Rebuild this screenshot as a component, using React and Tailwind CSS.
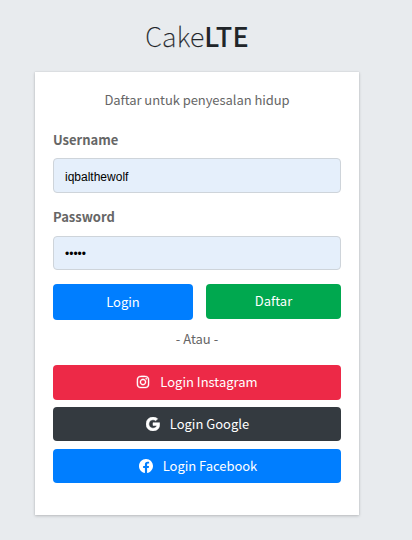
import { FaInstagram } from "react-icons/fa";
import { BsFacebook, BsGoogle } from "react-icons/bs";

function Field({ id, label, type, value, className, inputClass }) {
  return (
    <div className={className}>
      <label htmlFor={id} className="block h-[21px] text-[13px] leading-[20px] font-bold text-[#666666]">
        {label}
      </label>
      <input
        id={id}
        type={type}
        defaultValue={value}
        className={`block w-full rounded-[4px] border border-[#ced4da] bg-[#e5effb] px-[11px] font-['Liberation_Sans',sans-serif] text-[12px] text-black outline-none ${inputClass}`}
      />
    </div>
  );
}

function SocialButton({ icon, label, className }) {
  return (
    <button className={`flex w-full items-center justify-center gap-[10px] rounded-[4px] pb-px text-[13px] text-white ${className}`}>
      {icon}
      <span>{label}</span>
    </button>
  );
}

export default function App() {
  return (
    <div className="h-[540px] w-[412px] overflow-hidden bg-[#e8ebee] pl-[35px] font-['Noto_Sans_CJK_SC',sans-serif]">
      <div className="w-[324px]">
        <h1 className="h-[72px] pt-[15px] text-center text-[27px] leading-[42px] font-thin tracking-[0.1px] text-[#212529]">
          <span className="[-webkit-text-stroke:0.25px_#212529]">Cake</span>
          <b className="font-medium">LTE</b>
        </h1>
        <main className="h-[443px] bg-white px-[18px] pt-[18px] text-[13px] text-[#666666] shadow-[0_0_1px_rgba(0,0,0,0.13),0_1px_3px_rgba(0,0,0,0.2)]">
          <p className="h-[21px] text-center leading-[19px] tracking-[-0.06px]">Daftar untuk penyesalan hidup</p>
          <Field id="username" label="Username" type="text" value="iqbalthewolf" className="mt-[19px]" inputClass="mt-[7px] h-[35px] pt-[3px]" />
          <Field id="password" label="Password" type="password" value="wolf1" className="mt-[14px]" inputClass="mt-[8px] h-[34px] pt-[2px]" />
          <div className="mt-[14px] flex h-9 items-start gap-[13px] text-white">
            <button className="h-9 w-[140px] rounded-[4px] bg-[#007eff]">Login</button>
            <button className="h-[35px] w-[135px] rounded-[4px] bg-[#00a84f] pb-px">Daftar</button>
          </div>
          <p className="mt-[9px] h-[21px] text-center leading-[19px]">- Atau -</p>
          <div className="mt-[15px]">
            <SocialButton label="Login Instagram" className="h-[35px] bg-[#ed2947]" icon={<FaInstagram size={14} stroke="currentColor" strokeWidth={12} />} />
            <SocialButton label="Login Google" className="mt-[7px] h-[34px] bg-[#343a40] pl-px" icon={<BsGoogle size={14} stroke="currentColor" strokeWidth={0.6} />} />
            <SocialButton label="Login Facebook" className="mt-2 h-[34px] bg-[#007eff] pl-[2px] tracking-[-0.04px]" icon={<BsFacebook size={14} />} />
          </div>
        </main>
      </div>
    </div>
  );
}
